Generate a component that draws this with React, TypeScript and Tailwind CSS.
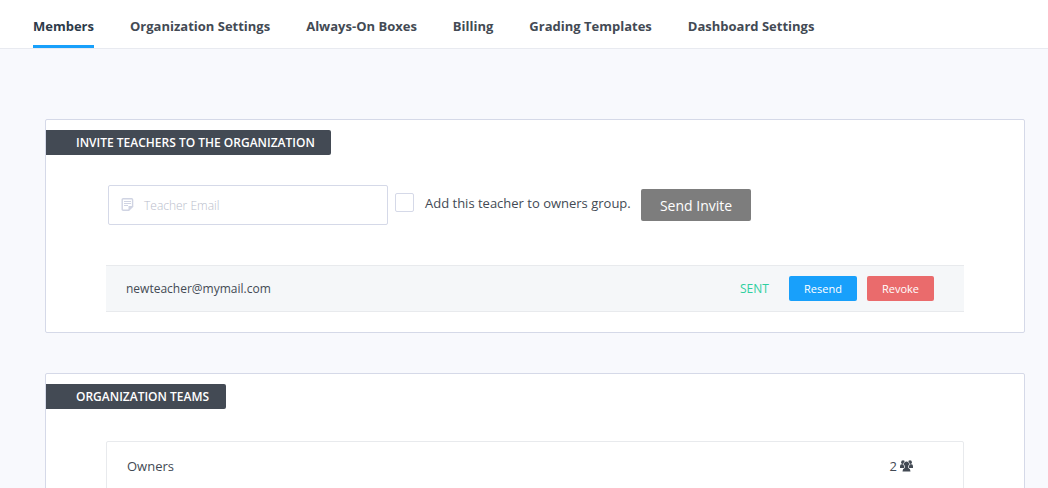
const tabs = ["Members", "Organization Settings", "Always-On Boxes", "Billing", "Grading Templates", "Dashboard Settings"];

function NoteIcon() {
  return (
    <svg width="13" height="13" viewBox="0 0 13 13" fill="none" stroke="currentColor">
      <path strokeWidth="1.400" strokeLinejoin="round" d="M2.200.700h8.400q1 0 1 1v6.800l-3.800 3.800H2.200q-1 0-1-1V1.700q0-1 1-1z" />
      <path fill="currentColor" stroke="none" d="M7.500 12.500V8h5z" />
      <path d="M3 3.500h7M3 5.500h7M3 7.500h4" />
    </svg>
  );
}

function UsersIcon() {
  return (
    <svg width="13" height="12" viewBox="0 0 13 12" fill="currentColor">
      <circle cx="3" cy="2.200" r="1.900" />
      <circle cx="10" cy="2.200" r="1.900" />
      <path d="M0 8V6.500Q0 4.300 1.500 4.300H4.500V8zM13 8V6.500Q13 4.300 11.500 4.300H8.500V8z" />
      <path stroke="white" strokeWidth="1.200" paintOrder="stroke" d="M6.500 1.500a2.500 2.500 0 0 1 1.700 4.400Q7.900 7.500 8.400 8 10.500 8.700 10.500 11.400H2.500Q2.500 8.700 4.600 8 5.100 7.500 4.800 5.900A2.500 2.500 0 0 1 6.500 1.500z" />
    </svg>
  );
}

export default function App() {
  return (
    <div className="flex h-[488px] flex-col overflow-hidden bg-[#f8f9fd] font-['Open_Sans',sans-serif] text-[13px] text-[#434a54]">
      <nav className="flex h-[49px] shrink-0 gap-9 border-b border-[#e8eaf0] bg-white pl-[33px] font-bold">
        {tabs.map((t, i) => (
          <div key={t} className={i === 0 ? "h-12 border-b-3 border-[#18a0fb] pt-4 leading-5 text-[#2c3a49]" : "h-12 pt-4 leading-5"}>{t}</div>
        ))}
      </nav>
      <section className="mt-[70px] ml-[45px] h-[214px] w-[980px] shrink-0 rounded-xs border border-[#d5d9e8] bg-white pt-2.5">
        <h2 className="flex h-[25px] w-[285px] items-center rounded-r-xs bg-[#434a54] pl-[30px] text-[12px] font-semibold text-white">INVITE TEACHERS TO THE ORGANIZATION</h2>
        <form className="mt-[30px] ml-[62px] flex">
          <div className="flex h-10 w-[280px] items-center rounded-xs border border-[#d5d9e8] pl-3 text-[12px] text-[#d0d4e3]">
            <span className="-mt-0.5"><NoteIcon /></span>
            <span className="ml-2.5 pt-0.5 font-light text-[#b9bdcb]">Teacher Email</span>
          </div>
          <div className="mt-2 ml-[7px] size-[19px] rounded-xs border border-[#d5d9e8]" />
          <span className="mt-2 ml-[11px] w-[216px] leading-5">Add this teacher to owners group.</span>
          <button type="button" className="mt-1 h-8 w-[110px] rounded-xs bg-[#7d7d7d] text-[14px] text-white">Send Invite</button>
        </form>
        <div className="mt-10 ml-[60px] flex h-[47px] w-[858px] items-center border-y border-[#e8eaed] bg-[#f5f7f9] pl-5">
          <span className="w-[613px] text-[12px]">newteacher@mymail.com</span>
          <span className="w-[50px] pl-px text-[12px] text-[#2fcfa0]">SENT</span>
          <button type="button" className="h-[25px] w-[68px] rounded-xs bg-[#18a0fb] pt-0.5 text-[11px] text-white">Resend</button>
          <button type="button" className="ml-2.5 h-[25px] w-[67px] rounded-xs bg-[#ea6b6c] pt-0.5 text-[11px] text-white">Revoke</button>
        </div>
      </section>
      <section className="mt-10 ml-[45px] h-[200px] w-[980px] shrink-0 rounded-xs border border-[#d5d9e8] bg-white pt-2.5">
        <h2 className="flex h-[25px] w-[180px] items-center rounded-r-xs bg-[#434a54] pl-[30px] text-[12px] font-semibold text-white">ORGANIZATION TEAMS</h2>
        <div className="mt-8 ml-[60px] flex h-[60px] w-[858px] justify-between rounded-xs border border-[#e8eaed] pt-3.5 pr-[50px] pl-5 leading-5">
          <span>Owners</span>
          <span className="flex items-center gap-[3px] self-start">2 <UsersIcon /></span>
        </div>
      </section>
    </div>
  );
}
